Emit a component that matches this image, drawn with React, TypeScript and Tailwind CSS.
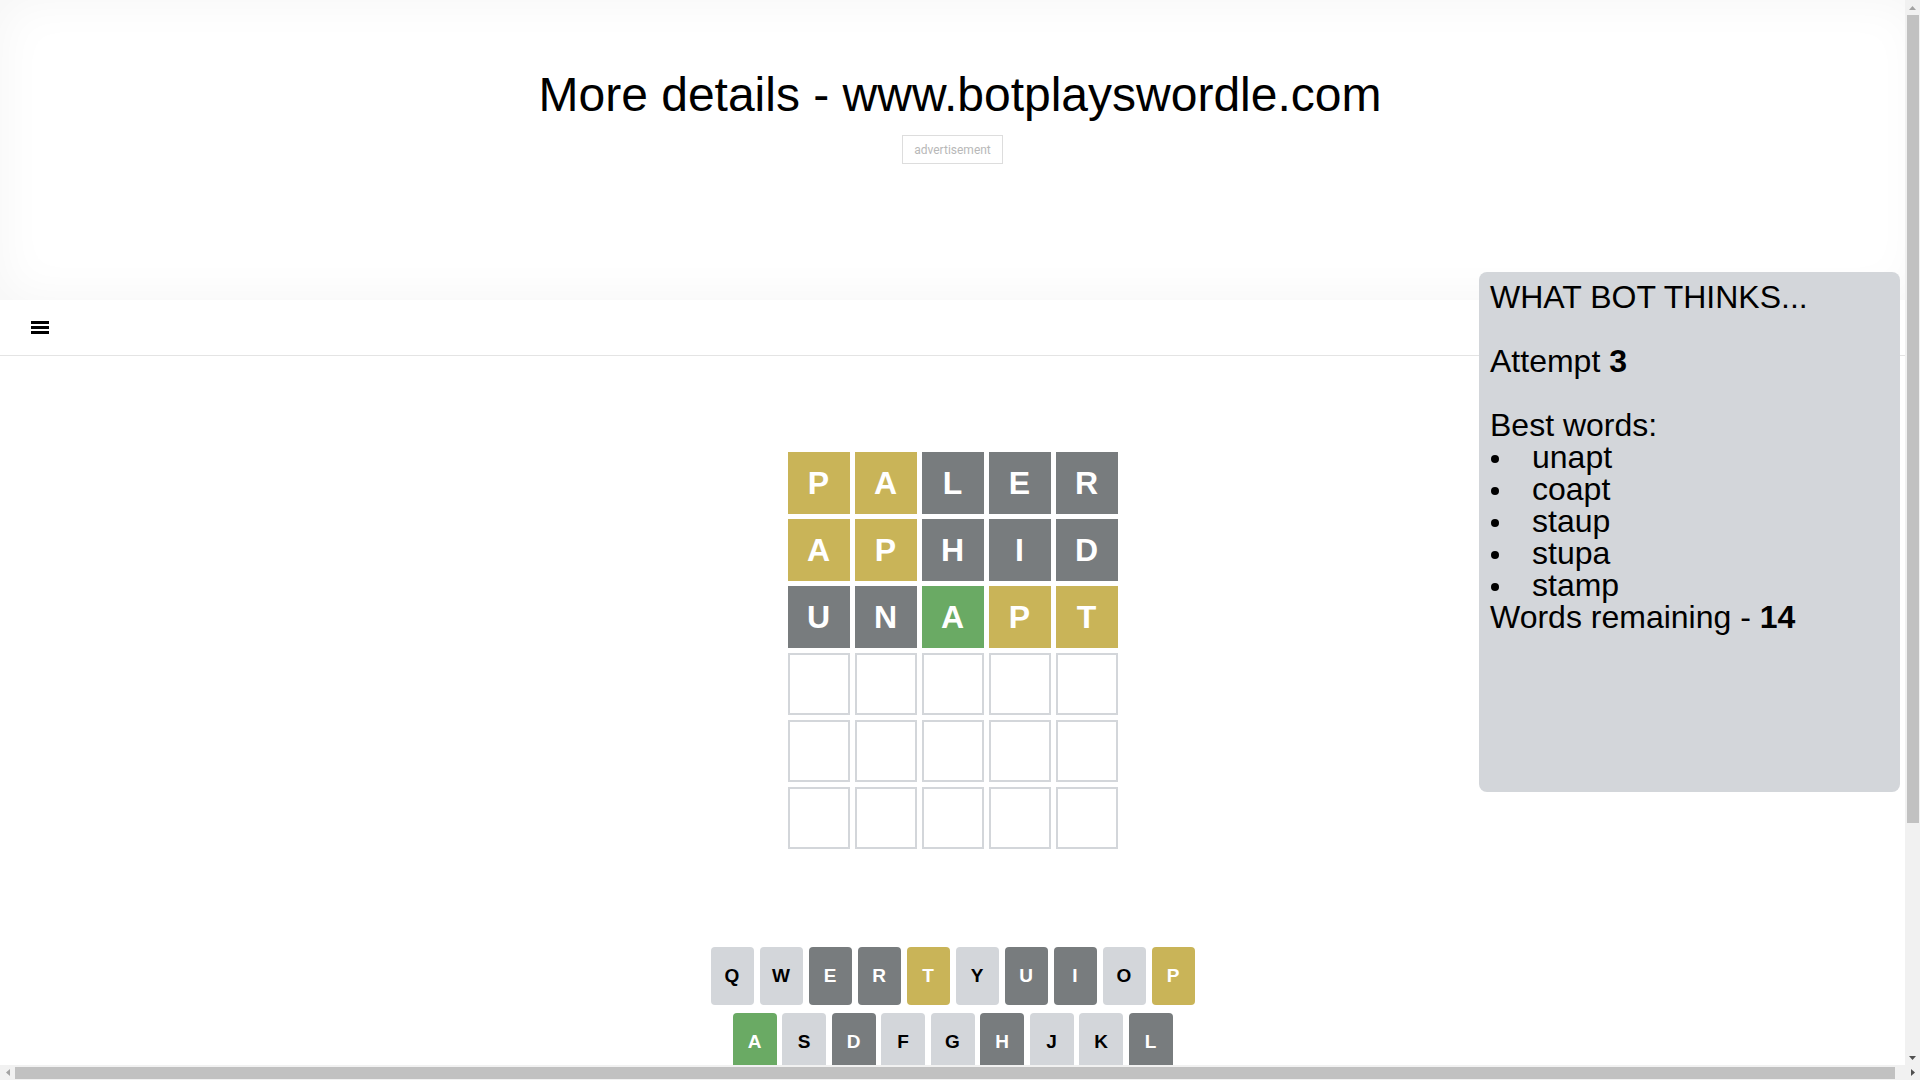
import React from "react";

type Tone = "yellow" | "gray" | "green" | "empty";

const tileTone: Record<Tone, string> = {
  yellow: "bg-[#c9b458] text-white",
  gray: "bg-[#787c7e] text-white",
  green: "bg-[#6aaa64] text-white",
  empty: "bg-white border-2 border-[#d3d6da]",
};

const keyTone: Record<string, string> = {
  light: "bg-[#d3d6da] text-black",
  gray: "bg-[#787c7e] text-white",
  yellow: "bg-[#c9b458] text-white",
  green: "bg-[#6aaa64] text-white",
};

const board: [string, Tone][][] = [
  [["P", "yellow"], ["A", "yellow"], ["L", "gray"], ["E", "gray"], ["R", "gray"]],
  [["A", "yellow"], ["P", "yellow"], ["H", "gray"], ["I", "gray"], ["D", "gray"]],
  [["U", "gray"], ["N", "gray"], ["A", "green"], ["P", "yellow"], ["T", "yellow"]],
  [["", "empty"], ["", "empty"], ["", "empty"], ["", "empty"], ["", "empty"]],
  [["", "empty"], ["", "empty"], ["", "empty"], ["", "empty"], ["", "empty"]],
  [["", "empty"], ["", "empty"], ["", "empty"], ["", "empty"], ["", "empty"]],
];

const keyRows: [string, string][][] = [
  [["Q", "light"], ["W", "light"], ["E", "gray"], ["R", "gray"], ["T", "yellow"], ["Y", "light"], ["U", "gray"], ["I", "gray"], ["O", "light"], ["P", "yellow"]],
  [["A", "green"], ["S", "light"], ["D", "gray"], ["F", "light"], ["G", "light"], ["H", "gray"], ["J", "light"], ["K", "light"], ["L", "gray"]],
  [["ENTER", "light"], ["Z", "light"], ["X", "light"], ["C", "light"], ["V", "light"], ["B", "light"], ["N", "gray"], ["M", "light"], ["⌫", "light"]],
];

const bestWords = ["unapt", "coapt", "staup", "stupa", "stamp"];

const MenuIcon = () => (
  <svg width="18" height="13" viewBox="0 0 18 13" fill="#000">
    <rect x="0" y="0" width="18" height="3" />
    <rect x="0" y="5" width="18" height="3" />
    <rect x="0" y="10" width="18" height="3" />
  </svg>
);

// little scrollbar arrow, dir = up | down | left | right
const Arrow = ({ dir, color }: { dir: string; color: string }) => {
  const pts: Record<string, string> = {
    up: "0,4 7,4 3.5,0",
    down: "0,0 7,0 3.5,4",
    left: "4,0 4,7 0,3.5",
    right: "0,0 0,7 4,3.5",
  };
  const vertical = dir === "up" || dir === "down";
  return (
    <svg width={vertical ? 7 : 4} height={vertical ? 4 : 7} viewBox={vertical ? "0 0 7 4" : "0 0 4 7"}>
      <polygon points={pts[dir]} fill={color} />
    </svg>
  );
};

const BotPanel = () => (
  <div className="absolute top-[272px] right-[5px] w-[421px] h-[520px] rounded-lg bg-[#d3d6da] pt-[9px] pl-[11px] text-[32px] leading-[32px] text-black font-['Liberation_Sans',Arial,sans-serif]">
    <div>WHAT BOT THINKS...</div>
    <br />
    <div>
      Attempt <b>3</b>
    </div>
    <br />
    <div>Best words:</div>
    <ul>
      {bestWords.map((w) => (
        <li key={w} className="flex items-center">
          <span className="w-[42px] flex items-center">
            <span className="w-2 h-2 ml-[1px] mt-[3px] rounded-full bg-black" />
          </span>
          {w}
        </li>
      ))}
    </ul>
    <div>
      Words remaining - <b>14</b>
    </div>
  </div>
);

const Page = () => (
  <div className="relative w-[1905px] h-[1065px] overflow-hidden bg-white">
    {/* header is 100vw wide, so the title centres on 1920 */}
    <header className="w-[1920px] h-[300px] bg-white shadow-[inset_0_0_50px_rgba(0,0,0,0.045)] pt-[67px]">
      <h1 className="text-center text-[48px] leading-[55px] text-black">More details - www.botplayswordle.com</h1>
      <div className="w-[1905px] flex justify-center">
        <div className="mt-[13px] w-[101px] h-[29px] border border-[#dddddd] flex items-center justify-center text-[12px] text-[#b8b8b8] font-['Roboto',sans-serif]">
          advertisement
        </div>
      </div>
    </header>

    <nav className="h-[56px] border-b border-[#e4e4e4] flex items-center px-[31px]">
      <MenuIcon />
    </nav>

    <main className="flex flex-col items-center pt-[96px]">
      <div className="grid grid-rows-6 gap-[5px]">
        {board.map((row, r) => (
          <div key={r} className="grid grid-cols-5 gap-[5px]">
            {row.map(([ch, tone], c) => (
              <div
                key={c}
                className={`w-[62px] h-[62px] flex items-center justify-center text-[32px] font-bold ${tileTone[tone]}`}
              >
                {ch}
              </div>
            ))}
          </div>
        ))}
      </div>

      <div className="mt-[98px] flex flex-col items-center gap-2">
        {keyRows.map((row, r) => (
          <div key={r} className={`flex ${r === 1 ? "gap-[5.5px]" : "gap-[6px]"}`}>
            {row.map(([k, tone]) => (
              <div
                key={k}
                className={`h-[58px] rounded-[4px] flex items-center justify-center font-bold ${
                  k.length > 1 ? "w-[65px] text-[12px]" : r === 1 ? "w-[44px] text-[19px]" : "w-[43px] text-[19px]"
                } ${keyTone[tone]}`}
              >
                {k}
              </div>
            ))}
          </div>
        ))}
      </div>
    </main>

    <BotPanel />
  </div>
);

export default function App() {
  return (
    <div className="w-[1920px] h-[1080px] overflow-hidden flex flex-col font-['Liberation_Sans',Arial,sans-serif]">
      <div className="flex">
        <Page />
        {/* vertical scrollbar */}
        <div className="w-[15px] h-[1065px] bg-[#f1f1f1] flex flex-col">
          <div className="h-[15px] flex items-center justify-center">
            <Arrow dir="up" color="#a3a3a3" />
          </div>
          <div className="flex-1 pl-[2px] pr-[1px]">
            <div className="h-[808px] bg-[#c1c1c1]" />
          </div>
          <div className="h-[15px] flex items-center justify-center">
            <Arrow dir="down" color="#505050" />
          </div>
        </div>
      </div>
      {/* horizontal scrollbar */}
      <div className="h-[15px] bg-[#f1f1f1] flex items-stretch">
        <div className="w-[15px] flex items-center justify-center">
          <Arrow dir="left" color="#a3a3a3" />
        </div>
        <div className="flex-1 pt-[2px] pb-[1px]">
          <div className="w-[1880px] h-full bg-[#c1c1c1]" />
        </div>
        <div className="w-[15px] flex items-center justify-center">
          <Arrow dir="right" color="#505050" />
        </div>
      </div>
    </div>
  );
}
